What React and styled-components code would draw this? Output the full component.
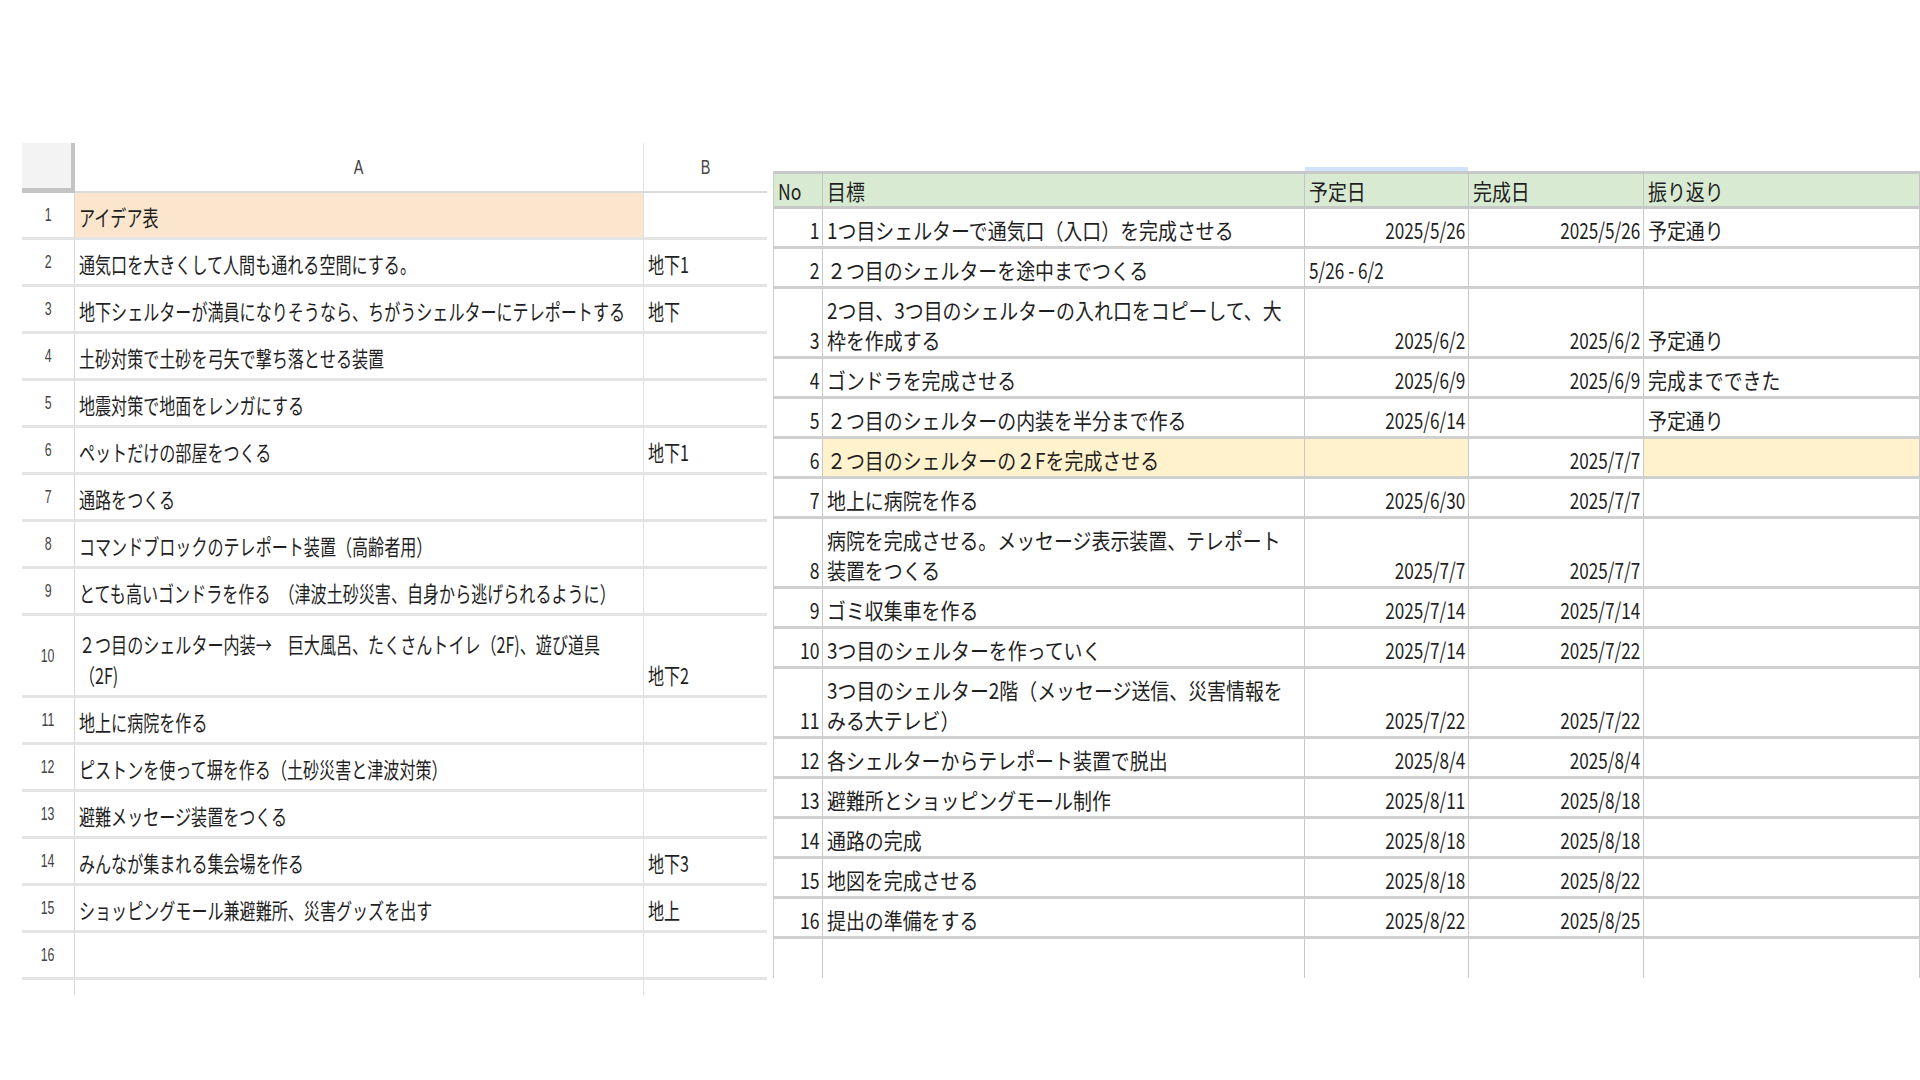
import React from "react";
import styled, { createGlobalStyle } from "styled-components";

const Global = createGlobalStyle`
  html, body { margin: 0; padding: 0; background: #fff; }
  body { font-family: "Noto Sans CJK JP", "Noto Sans", sans-serif; color: #1f1f1f; }
`;

const Page = styled.div`
  width: 1920px; height: 1080px; overflow: hidden;
  display: flex; align-items: flex-start; gap: 6px;
  padding: 143px 0 0 22px; box-sizing: border-box;
`;

const Sheet = styled.div`
  display: grid; grid-template-columns: 53px 569px 124px; width: 746px;
  height: 852px; overflow: hidden; align-content: start;
`;

const Corner = styled.div`
  height: 50px; background: #f3f3f3; border-bottom: 5px solid #c4c4c4; border-right: 4px solid #c4c4c4; box-sizing: border-box;
`;
const ColHead = styled.div`
  height: 50px; box-sizing: border-box; border-right: 1px solid #e0e0e0; border-bottom: 2px solid #dadada;
  display: flex; align-items: center; justify-content: center; font-size: 20px; color: #444;
  font-family: "Liberation Sans", sans-serif;
  & > span { display: inline-block; transform: scaleX(0.72); }
`;
const RowNum = styled.div`
  height: ${p => p.$h}px; box-sizing: border-box; border-bottom: 3px solid #e4e4e4; border-right: 1px solid #d8d8d8;
  display: flex; align-items: center; justify-content: center; font-size: 19px; color: #444;
  font-family: "Liberation Sans", sans-serif;
  & > span { transform: scaleX(0.65); display: inline-block; }
`;
const LCell = styled.div`
  height: ${p => p.$h}px; box-sizing: border-box; border-bottom: 3px solid #e4e4e4; border-right: 1px solid #e0e0e0;
  background: ${p => p.$bg || "#fff"}; padding: 0 4px 5px; display: flex; align-items: flex-end;
  font-size: 22px; line-height: 31px; overflow: visible;
`;

const Txt = styled.span`
  display: block; white-space: nowrap;
  width: ${p => 100 / p.$s}%;
  transform: scaleX(${p => p.$s});
  transform-origin: ${p => (p.$right ? "right" : "left")} bottom;
  margin-left: ${p => (p.$right ? `-${100 / p.$s - 100}%` : "0")};
  text-align: ${p => (p.$right ? "right" : "left")};
`;

const Table = styled.div`
  margin-top: 28px; display: grid; grid-template-columns: 49px 482px 164px 175px 276px;
  border-left: 1px solid #ccc; align-content: start;
`;
const Head = styled.div`
  height: 38px; box-sizing: border-box; background: #d9ead3; border-top: 3px solid #c8c8c8;
  border-bottom: 3px solid #c8c8c8; border-right: 1px solid #c4c4c4;
  padding: 0 4px 1px; display: flex; align-items: flex-end; font-size: 22px; line-height: 30px;
  position: relative;
  ${p => p.$sel && `&::before{content:"";position:absolute;left:0;right:0;top:-7px;height:4px;background:#d3e3fd;}`}
`;
const TCell = styled.div`
  height: ${p => p.$h}px; box-sizing: border-box; border-bottom: ${p => (p.$last ? "none" : "3px solid #d0d0d0")}; border-right: 1px solid #c8c8c8;
  background: ${p => p.$bg || "#fff"}; padding: 0 ${p => (p.$right ? 3 : 4)}px 2px; display: flex; align-items: flex-end;
  font-size: 22px; line-height: 30px;
`;

const ideas = [
  ["アイデア表", "", 47, "#fce5cd"],
  ["通気口を大きくして人間も通れる空間にする。", "地下1", 47],
  ["地下シェルターが満員になりそうなら、ちがうシェルターにテレポートする", "地下", 47],
  ["土砂対策で土砂を弓矢で撃ち落とせる装置", "", 47],
  ["地震対策で地面をレンガにする", "", 47],
  ["ペットだけの部屋をつくる", "地下1", 47],
  ["通路をつくる", "", 47],
  ["コマンドブロックのテレポート装置（高齢者用）", "", 47],
  ["とても高いゴンドラを作る　（津波土砂災害、自身から逃げられるように）", "", 47],
  [["２つ目のシェルター内装→　巨大風呂、たくさんトイレ（2F)、遊び道具", "（2F)"], "地下2", 82],
  ["地上に病院を作る", "", 47],
  ["ピストンを使って塀を作る（土砂災害と津波対策）", "", 47],
  ["避難メッセージ装置をつくる", "", 47],
  ["みんなが集まれる集会場を作る", "地下3", 47],
  ["ショッピングモール兼避難所、災害グッズを出す", "地上", 47],
  ["", "", 47],
  ["", "", 47],
];

const goals = [
  ["1", "1つ目シェルターで通気口（入口）を完成させる", "2025/5/26", "2025/5/26", "予定通り", 40],
  ["2", "２つ目のシェルターを途中までつくる", "5/26 - 6/2", "", "", 40, "range"],
  ["3", ["2つ目、3つ目のシェルターの入れ口をコピーして、大", "枠を作成する"], "2025/6/2", "2025/6/2", "予定通り", 70],
  ["4", "ゴンドラを完成させる", "2025/6/9", "2025/6/9", "完成までできた", 40],
  ["5", "２つ目のシェルターの内装を半分まで作る", "2025/6/14", "", "予定通り", 40],
  ["6", "２つ目のシェルターの２Fを完成させる", "", "2025/7/7", "", 40, "hl"],
  ["7", "地上に病院を作る", "2025/6/30", "2025/7/7", "", 40],
  ["8", ["病院を完成させる。メッセージ表示装置、テレポート", "装置をつくる"], "2025/7/7", "2025/7/7", "", 70],
  ["9", "ゴミ収集車を作る", "2025/7/14", "2025/7/14", "", 40],
  ["10", "3つ目のシェルターを作っていく", "2025/7/14", "2025/7/22", "", 40],
  ["11", ["3つ目のシェルター2階（メッセージ送信、災害情報を", "みる大テレビ）"], "2025/7/22", "2025/7/22", "", 70],
  ["12", "各シェルターからテレポート装置で脱出", "2025/8/4", "2025/8/4", "", 40],
  ["13", "避難所とショッピングモール制作", "2025/8/11", "2025/8/18", "", 40],
  ["14", "通路の完成", "2025/8/18", "2025/8/18", "", 40],
  ["15", "地図を完成させる", "2025/8/18", "2025/8/22", "", 40],
  ["16", "提出の準備をする", "2025/8/22", "2025/8/25", "", 40],
  ["", "", "", "", "", 39, "last"],
];

const lines = t => (Array.isArray(t) ? t.map((l, i) => <React.Fragment key={i}>{i > 0 && <br />}{l}</React.Fragment>) : t);

export default function App() {
  return (
    <>
      <Global />
      <Page>
        <Sheet>
          <Corner />
          <ColHead><span>A</span></ColHead>
          <ColHead><span>B</span></ColHead>
          {ideas.map(([a, b, h, bg], i) => (
            <React.Fragment key={i}>
              <RowNum $h={h}><span>{i + 1}</span></RowNum>
              <LCell $h={h} $bg={bg}><Txt $s={0.73}>{lines(a)}</Txt></LCell>
              <LCell $h={h}><Txt $s={0.73}>{b}</Txt></LCell>
            </React.Fragment>
          ))}
        </Sheet>
        <Table>
          <Head><Txt $s={0.8}>No</Txt></Head>
          <Head><Txt $s={0.86}>目標</Txt></Head>
          <Head $sel><Txt $s={0.86}>予定日</Txt></Head>
          <Head><Txt $s={0.86}>完成日</Txt></Head>
          <Head><Txt $s={0.86}>振り返り</Txt></Head>
          {goals.map(([n, g, p, d, r, h, f], i) => {
            const hl = f === "hl" ? "#fff2cc" : undefined;
            const last = f === "last";
            return (
              <React.Fragment key={i}>
                <TCell $h={h} $last={last} $right><Txt $s={0.8} $right>{n}</Txt></TCell>
                <TCell $h={h} $last={last} $bg={hl}><Txt $s={0.86}>{lines(g)}</Txt></TCell>
                <TCell $h={h} $last={last} $bg={hl} $right={f !== "range"}><Txt $s={0.78} $right={f !== "range"}>{p}</Txt></TCell>
                <TCell $h={h} $last={last} $right><Txt $s={0.78} $right>{d}</Txt></TCell>
                <TCell $h={h} $last={last} $bg={hl}><Txt $s={0.86}>{r}</Txt></TCell>
              </React.Fragment>
            );
          })}
        </Table>
      </Page>
    </>
  );
}
